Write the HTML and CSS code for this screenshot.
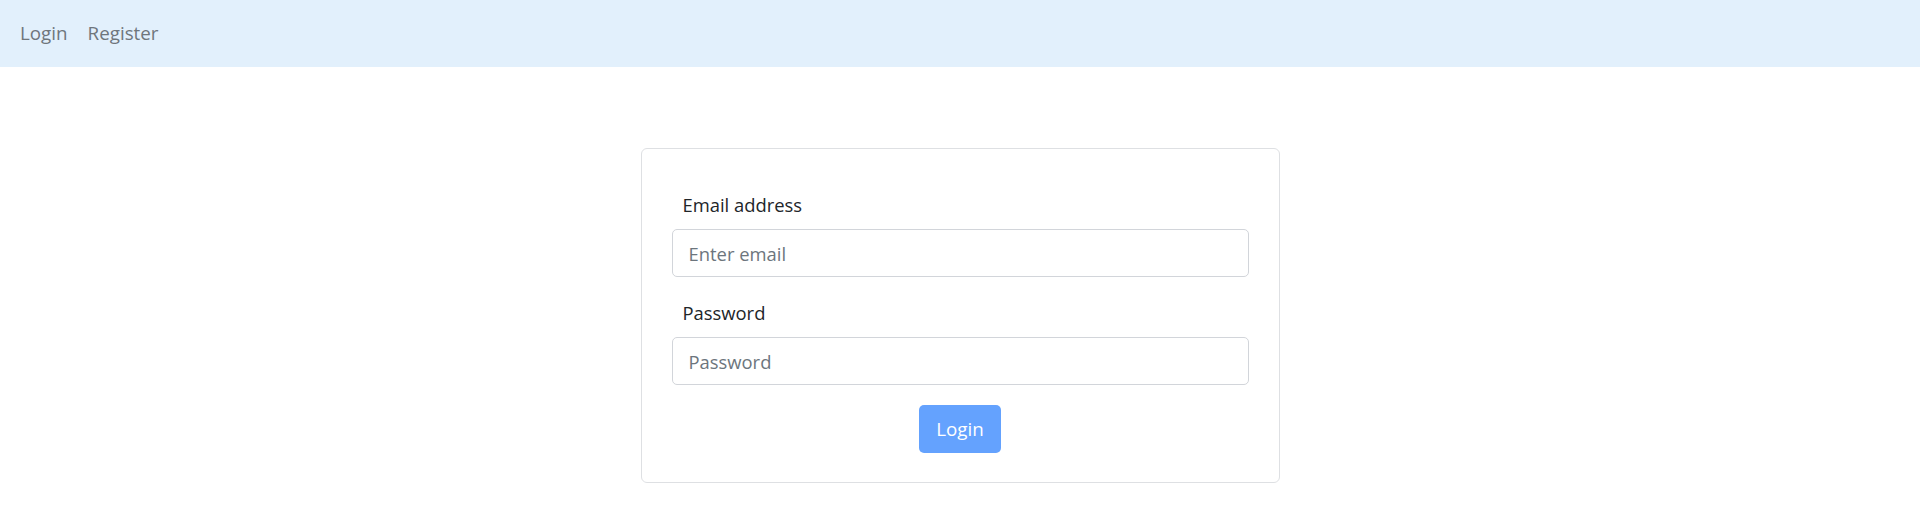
FILE: index.html
```html
<!DOCTYPE html>
<html lang="en">
<head>
<meta charset="utf-8">
<title>Login</title>
<link rel="stylesheet" href="styles.css">
</head>
<body>
<nav class="navbar">
  <a class="nav-link" href="#">Login</a>
  <a class="nav-link" href="#">Register</a>
</nav>
<main class="page">
  <form class="card">
    <div class="group">
      <label class="label" for="email">Email address</label>
      <input class="input" id="email" type="email" placeholder="Enter email">
    </div>
    <div class="group">
      <label class="label" for="password">Password</label>
      <input class="input" id="password" type="password" placeholder="Password">
    </div>
    <div class="actions">
      <button class="btn" type="button">Login</button>
    </div>
  </form>
</main>
</body>
</html>
```
FILE: styles.css
```css
* { box-sizing: border-box; }
html, body { margin: 0; padding: 0; }
body {
  font-family: "Open Sans", "Noto Sans", sans-serif;
  font-size: 19.2px;
  color: #212529;
  background: #fff;
}
.navbar {
  height: 67px;
  background: #e2f0fc;
  display: flex;
  align-items: center;
  padding: 0 10px;
}
.nav-link {
  color: #6f767c;
  text-decoration: none;
  font-size: 18.8px;
  padding: 0 10px;
  line-height: 29px;
}
.page {
  display: flex;
  justify-content: center;
  padding-top: 81px;
}
.card {
  width: 639px;
  border: 1px solid #dee0e3;
  border-radius: 6px;
  padding: 41px 30px 29px;
  display: flex;
  flex-direction: column;
}
.group {
  display: flex;
  flex-direction: column;
  margin-bottom: 11px;
}
.group + .group { margin-bottom: 0; }
.label {
  display: block;
  font-size: 18.4px;
  line-height: 29px;
  padding-left: 11px;
  margin-bottom: 10px;
  color: #212529;
}
.input {
  height: 48px;
  width: 100%;
  border: 1px solid #d2d5da;
  border-radius: 5px;
  padding: 0 16px;
  font-family: inherit;
  font-size: 18.4px;
  color: #212529;
  margin-bottom: 10px;
}
.input::placeholder { color: #6c757d; }
.actions {
  display: flex;
  justify-content: center;
  margin-top: 10px;
}
.btn {
  height: 48px;
  width: 82px;
  border: none;
  border-radius: 5px;
  background: #64a2fe;
  color: #fff;
  font-family: inherit;
  font-size: 18.8px;
  padding: 0;
}
```
